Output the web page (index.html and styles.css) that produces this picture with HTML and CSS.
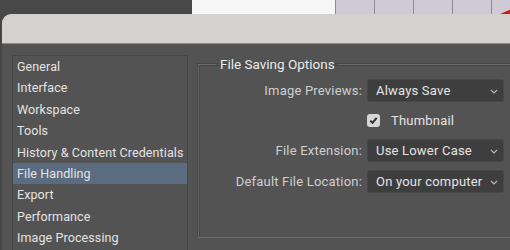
FILE: index.html
```html
<!DOCTYPE html>
<html lang="en">
<head>
  <meta charset="UTF-8" />
  <meta name="viewport" content="width=device-width, initial-scale=1.0" />
  <title>Preferences</title>
  <link rel="stylesheet" href="styles.css">
</head>
<body>
  <div class="topbar">
    <div class="top-dark"></div>
    <div class="top-canvas"></div>
    <div class="top-grid">
      <span></span><span></span><span></span><span></span><span class="last"></span>
    </div>
  </div>
  <div class="dialog">
    <div class="titlebar"></div>
    <div class="body">
      <ul class="sidebar">
        <li>General</li>
        <li>Interface</li>
        <li>Workspace</li>
        <li>Tools</li>
        <li>History &amp; Content Credentials</li>
        <li class="selected">File Handling</li>
        <li>Export</li>
        <li>Performance</li>
        <li>Image Processing</li>
      </ul>
      <fieldset class="group">
        <legend>File Saving Options</legend>
        <div class="form">
          <label>Image Previews:</label>
          <div class="select">Always Save
            <svg class="chev" width="8" height="5" viewBox="0 0 8 5"><path d="M1 1l3 3 3-3" fill="none" stroke="#bbb" stroke-width="1.1"/></svg>
          </div>
          <span></span>
          <div class="check">
            <span class="box"><svg width="11" height="11" viewBox="0 0 11 11"><path d="M2.3 5.6l2.2 2.3 4.2-5" fill="none" stroke="#2b2b2b" stroke-width="1.9"/></svg></span>
            Thumbnail
          </div>
          <label>File Extension:</label>
          <div class="select">Use Lower Case
            <svg class="chev" width="8" height="5" viewBox="0 0 8 5"><path d="M1 1l3 3 3-3" fill="none" stroke="#bbb" stroke-width="1.1"/></svg>
          </div>
          <label>Default File Location:</label>
          <div class="select">On your computer
            <svg class="chev" width="8" height="5" viewBox="0 0 8 5"><path d="M1 1l3 3 3-3" fill="none" stroke="#bbb" stroke-width="1.1"/></svg>
          </div>
        </div>
      </fieldset>
    </div>
  </div>
</body>
</html>
```

FILE: styles.css
```css
:root {
  --panel: #535353;
  --text: #e4e4e4;
  --label: #cfcfcf;
  --field: #3e3e3e;
}
* {
  margin: 0;
  padding: 0;
  box-sizing: border-box;
}
html, body {
  width: 510px;
  height: 250px;
  overflow: hidden;
  background: #464646;
  font-family: 'Roboto', 'Liberation Sans', sans-serif;
  font-size: 13px;
  color: var(--text);
}

.topbar {
  display: flex;
  width: 510px;
  height: 14px;
}
.topbar > div { flex-shrink: 0; }
.top-dark { width: 192px; background: #484848; }
.top-canvas { width: 143px; background: #f6f6f6; }
.top-grid {
  width: 175px;
  display: flex;
  background: #cfcad6;
}
.top-grid span {
  flex-shrink: 0;
  width: 39px;
  border-left: 1px solid #8d8a92;
}
.top-grid span.last {
  width: 19px;
  position: relative;
  overflow: hidden;
}
.top-grid span.last::after {
  content: "";
  position: absolute;
  right: -2px;
  bottom: 0;
  border-left: 12px solid transparent;
  border-bottom: 5px solid #d8141b;
}

.dialog {
  width: 560px;
  margin-left: 2px;
  border-top-left-radius: 9px;
  overflow: hidden;
  background: var(--panel);
}
.titlebar {
  height: 30px;
  background: #d3d2d0;
  border-bottom: 1px solid #8a8a8a;
}
.body {
  display: flex;
  gap: 10px;
  padding: 11px 0 0 10px;
}

.sidebar {
  list-style: none;
  width: 176px;
  height: 210px;
  border: 1px solid #464646;
}
.sidebar li {
  height: 21.4px;
  line-height: 21.4px;
  padding-left: 4px;
  white-space: nowrap;
  font-size: 12.5px;
  letter-spacing: 0.1px;
}
.sidebar li.selected {
  background: #5b6b80;
}

.group {
  flex: 1;
  margin-top: 1px;
  height: 182px;
  border: 1px solid #6a6a6a;
  box-shadow: inset 1px 1px 0 #454545, -1px -1px 0 #454545;
  padding: 8px 0 0 0;
}
.group legend {
  margin-left: 17px;
  padding: 0 4px;
  line-height: 16px;
  font-size: 13.5px;
  color: #ececec;
}

.form {
  display: grid;
  grid-template-columns: 163px 135px;
  column-gap: 6px;
  row-gap: 10px;
  align-items: center;
}
.form label {
  text-align: right;
  color: var(--label);
  letter-spacing: 0.2px;
}
.select {
  position: relative;
  height: 21px;
  line-height: 21px;
  padding-left: 8px;
  background: var(--field);
  border-radius: 2px;
  box-shadow: 0 0 0 1px #474747;
  white-space: nowrap;
  overflow: hidden;
  letter-spacing: 0.2px;
}
.chev {
  position: absolute;
  right: 5px;
  top: 9px;
}
.check {
  display: flex;
  align-items: center;
  gap: 11px;
  height: 19px;
  margin-left: -1px;
  letter-spacing: 0.2px;
}
.box {
  width: 13px;
  height: 13px;
  border-radius: 3px;
  background: #d7d7d7;
  display: flex;
  align-items: center;
  justify-content: center;
}
```
